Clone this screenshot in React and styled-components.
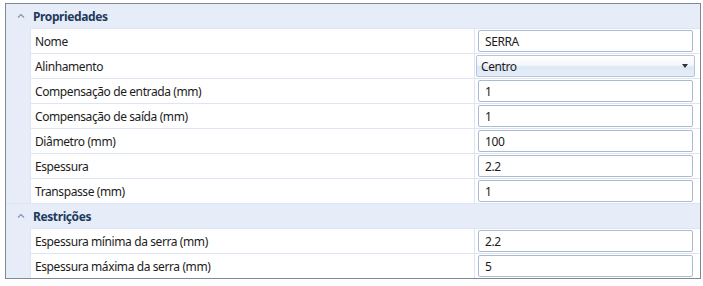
import React from 'react';
import styled, { createGlobalStyle } from 'styled-components';

const GlobalStyle = createGlobalStyle`
    body {
        margin: 0;
        background: #FFFFFF;
        font-family: "Noto Sans", "Open Sans", sans-serif;
        font-size: 12px;
        letter-spacing: -0.4px;
    }
`;

const Grid = styled.div`
    margin: 3px 0 0 5px;
    width: 696px;
    box-sizing: border-box;
    border: 1px solid #828790;
    background: #FFFFFF;
`;

const Header = styled.div`
    height: 24px;
    display: flex;
    align-items: center;
    background: #E6EDF8;
    border-top: ${p => p.first ? 'none' : '1px solid #DCE5F1'};
`;

const Toggle = styled.div`
    width: 27px;
    display: flex;
    justify-content: center;
    padding-left: 2px;
    box-sizing: border-box;
`;

const Title = styled.span`
    font-weight: 700;
    color: #1E3A5C;
`;

const Body = styled.div`
    display: flex;
`;

const Indent = styled.div`
    width: 24px;
    background: #E6EDF8;
    flex: none;
`;

const Rows = styled.div`
    flex: 1;
    border-left: 1px solid #DCE5F1;
`;

const Row = styled.div`
    display: grid;
    grid-template-columns: 443px 1px 225px;
    height: 24px;
    border-top: 1px solid #DCE5F1;
`;

const Label = styled.div`
    padding-left: 4px;
    display: flex;
    align-items: center;
    color: #1C1C1C;
    white-space: nowrap;
`;

const Divider = styled.div`
    background: #DCE5F1;
`;

const Cell = styled.div`
    padding: 1px 7px 1px 3px;
    display: flex;
`;

const Input = styled.div`
    flex: 1;
    box-sizing: border-box;
    height: 22px;
    border: 1px solid #ABBBD2;
    border-radius: 2px;
    padding-left: 6px;
    display: flex;
    align-items: center;
    color: #1C1C1C;
    background: #FFFFFF;
`;

const SelectCell = styled.div`
    padding: 1px 5px 1px 1px;
    display: flex;
`;

const Select = styled.div`
    flex: 1;
    box-sizing: border-box;
    height: 22px;
    border: 1px solid #B5C4D8;
    border-radius: 2px;
    padding: 0 6px 0 4px;
    display: flex;
    align-items: center;
    justify-content: space-between;
    color: #1C1C1C;
    background: linear-gradient(#FFFFFF 0%, #F3F7FC 45%, #DEE8F5 55%, #E5EDF8 100%);
`;

const Arrow = styled.span`
    width: 0;
    height: 0;
    border-left: 3px solid transparent;
    border-right: 3px solid transparent;
    border-top: 4px solid #303030;
`;

const Chevron = () => (
    <svg width="8" height="6" viewBox="0 0 8 6">
        <polyline points="1,4.5 4,1.5 7,4.5" fill="none" stroke="#7C95B8" strokeWidth="1.2" />
    </svg>
);

const sections = [
    {
        title: 'Propriedades',
        rows: [
            { label: 'Nome', value: 'SERRA' },
            { label: 'Alinhamento', value: 'Centro', select: true },
            { label: 'Compensação de entrada (mm)', value: '1' },
            { label: 'Compensação de saída (mm)', value: '1' },
            { label: 'Diâmetro (mm)', value: '100' },
            { label: 'Espessura', value: '2.2' },
            { label: 'Transpasse (mm)', value: '1' },
        ],
    },
    {
        title: 'Restrições',
        rows: [
            { label: 'Espessura mínima da serra (mm)', value: '2.2' },
            { label: 'Espessura máxima da serra (mm)', value: '5' },
        ],
    },
];

export default function App() {
    return (
        <>
            <GlobalStyle />
            <Grid>
                {sections.map((section, i) => (
                    <div key={section.title}>
                        <Header first={i === 0}>
                            <Toggle><Chevron /></Toggle>
                            <Title>{section.title}</Title>
                        </Header>
                        <Body>
                            <Indent />
                            <Rows>
                                {section.rows.map(row => (
                                    <Row key={row.label}>
                                        <Label>{row.label}</Label>
                                        <Divider />
                                        {row.select ? (
                                            <SelectCell>
                                                <Select>{row.value}<Arrow /></Select>
                                            </SelectCell>
                                        ) : (
                                            <Cell>
                                                <Input>{row.value}</Input>
                                            </Cell>
                                        )}
                                    </Row>
                                ))}
                            </Rows>
                        </Body>
                    </div>
                ))}
            </Grid>
        </>
    );
}
